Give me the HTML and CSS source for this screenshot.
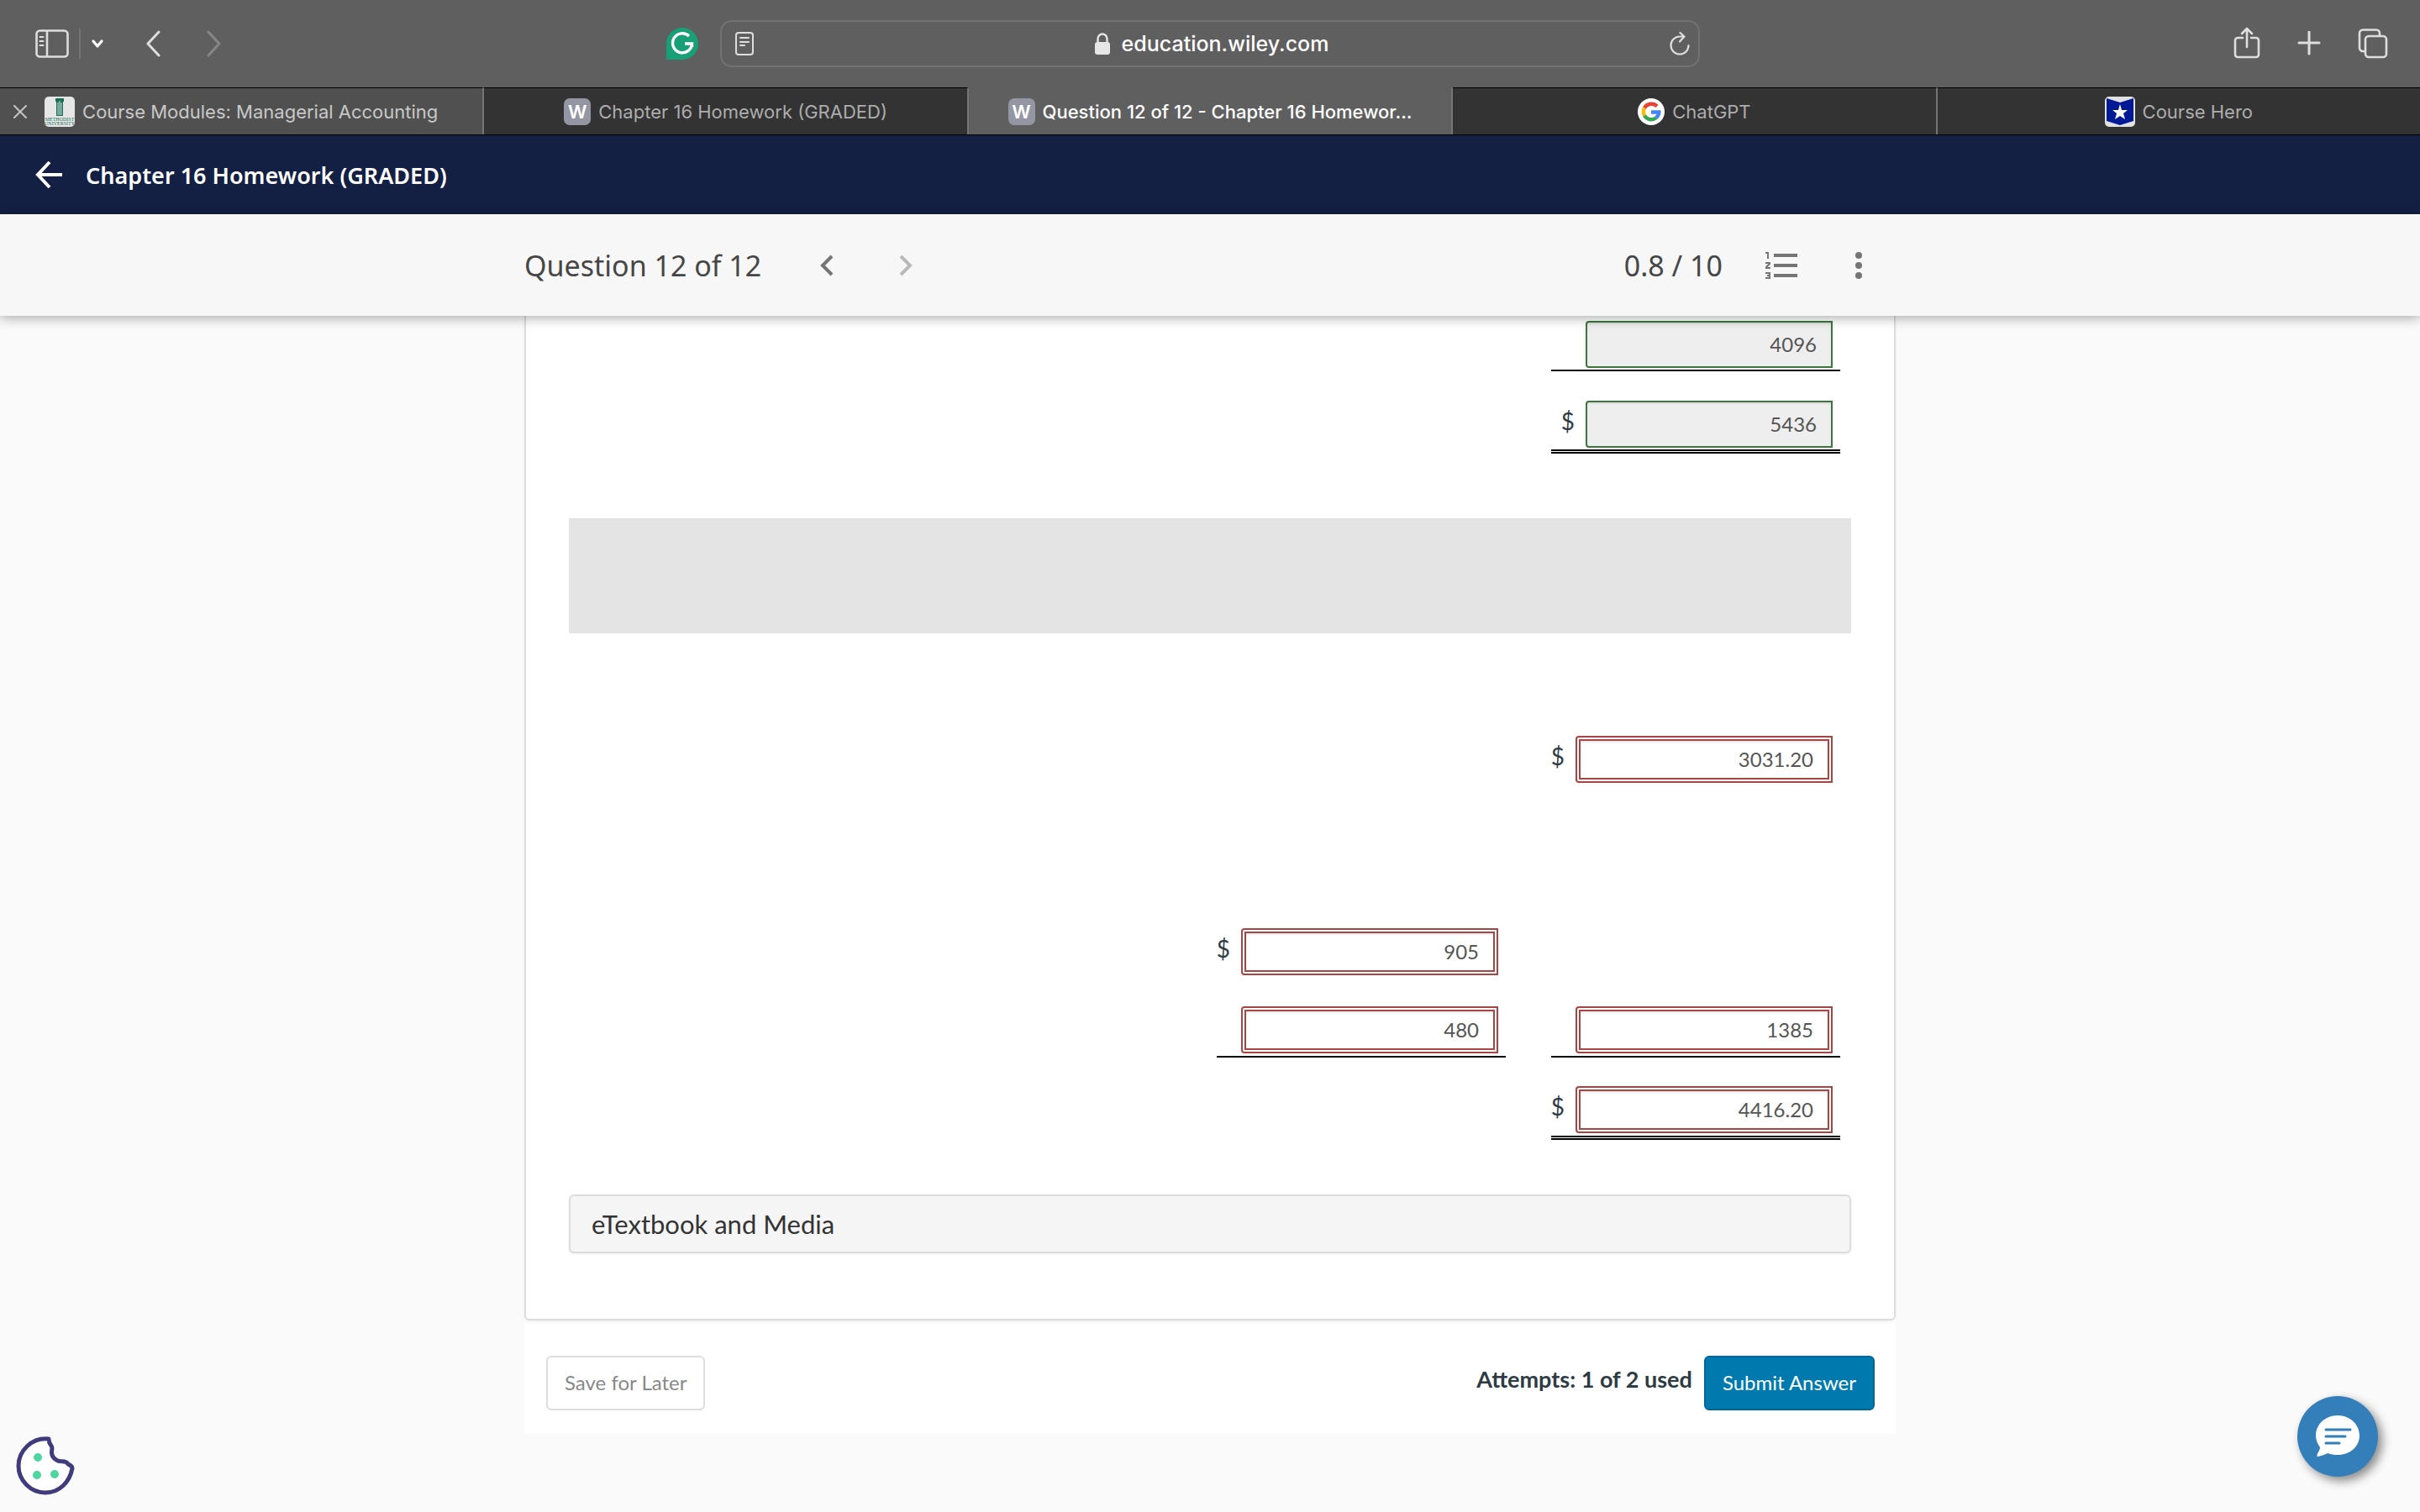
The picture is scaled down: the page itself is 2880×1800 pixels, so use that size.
FILE: index.html
```html
<!DOCTYPE html>
<html lang="en">
<head>
    <meta charset="UTF-8">
    <meta name="viewport" content="width=device-width, initial-scale=1.0">
    <title>Question 12 of 12 - Chapter 16 Homework</title>
    <link rel="stylesheet" href="styles.css">
</head>
<body>
    <!-- Browser toolbar -->
    <div class="toolbar">
        <div class="tools-left">
            <button class="icon-btn" aria-label="Show sidebar">
                <svg width="40" height="34" viewBox="0 0 40 34" fill="none" stroke="#dedede" stroke-width="2.6">
                    <rect x="1.5" y="1.5" width="37" height="31" rx="4"/>
                    <path d="M14 2v30"/>
                    <path d="M5.5 9h4M5.5 14h4M5.5 19h4" stroke-width="2" stroke-linecap="round"/>
                </svg>
            </button>
            <span class="divider"></span>
            <button class="icon-btn caret" aria-label="Tab groups">
                <svg width="16" height="12" viewBox="0 0 16 12" fill="none" stroke="#fff" stroke-width="3.2" stroke-linecap="round" stroke-linejoin="round"><path d="M3 3l5 6 5-6"/></svg>
            </button>
            <button class="icon-btn back" aria-label="Back">
                <svg width="18" height="32" viewBox="0 0 18 32" fill="none" stroke="#dedede" stroke-width="3" stroke-linecap="round" stroke-linejoin="round"><path d="M15 2L2 16l13 14"/></svg>
            </button>
            <button class="icon-btn forward" aria-label="Forward" disabled>
                <svg width="18" height="32" viewBox="0 0 18 32" fill="none" stroke="#868686" stroke-width="3" stroke-linecap="round" stroke-linejoin="round"><path d="M2 2l13 14L2 30"/></svg>
            </button>
            <button class="icon-btn grammar" aria-label="Grammarly">
                <svg width="38" height="38" viewBox="0 0 38 38">
                    <path d="M0 38V19a19 19 0 1 1 19 19z" fill="#17a076"/>
                    <path d="M27 10A11.5 11.5 0 1 0 30.5 19H22M30.5 18v5" fill="none" stroke="#fff" stroke-width="3.4"/>
                </svg>
            </button>
        </div>
        <div class="address">
            <button class="icon-btn" aria-label="Show reader">
                <svg width="22" height="28" viewBox="0 0 22 28" fill="none" stroke="#dedede" stroke-width="2" stroke-linecap="round"><rect x="1" y="1" width="20" height="26" rx="3"/><path d="M6 7h10M6 12h10M6 16h5"/></svg>
            </button>
            <span class="url">
                <svg width="18" height="26" viewBox="0 0 18 26"><rect y="11" width="18" height="15" rx="3" fill="#e6e6e6"/><path d="M3.5 12V7a5.5 5.5 0 0 1 11 0v5" fill="none" stroke="#e6e6e6" stroke-width="2.4"/></svg>
                education.wiley.com
            </span>
            <button class="icon-btn" aria-label="Reload">
                <svg width="24" height="28" viewBox="0 0 24 28" fill="none" stroke="#dedede" stroke-width="2.2" stroke-linecap="round" stroke-linejoin="round"><path d="M22.5 16a10.5 10.5 0 1 1-10.5-10.5h5M12.5 1l5 4.5-5.5 6"/></svg>
            </button>
        </div>
        <div class="tools-right">
            <button class="icon-btn" aria-label="Share">
                <svg width="32" height="40" viewBox="0 0 32 40" fill="none" stroke="#dedede" stroke-width="2.6" stroke-linecap="round" stroke-linejoin="round"><path d="M11 13H5a3 3 0 0 0-3 3v17a3 3 0 0 0 3 3h22a3 3 0 0 0 3-3V16a3 3 0 0 0-3-3h-6M16 24V2M10 8l6-6 6 6"/></svg>
            </button>
            <button class="icon-btn" aria-label="New tab">
                <svg width="28" height="30" viewBox="0 0 28 30" stroke="#dedede" stroke-width="3" stroke-linecap="round"><path d="M14 1v26M2 14h24"/></svg>
            </button>
            <button class="icon-btn" aria-label="Tab overview">
                <svg width="36" height="36" viewBox="0 0 36 36" fill="none" stroke="#dedede" stroke-width="2.6" stroke-linejoin="round"><rect x="9" y="9" width="25" height="25" rx="4"/><path d="M9 27H6a4 4 0 0 1-4-4V5.5a4 4 0 0 1 4-4h16a4 4 0 0 1 4 4v4"/></svg>
            </button>
        </div>
    </div>

    <!-- Tabs -->
    <div class="tabs">
        <div class="tab hovered">
            <button class="icon-btn close" aria-label="Close tab">
                <svg width="16" height="16" viewBox="0 0 16 16" stroke="#c4c4c4" stroke-width="2" stroke-linecap="round"><path d="M1 1l14 14M15 1L1 15"/></svg>
            </button>
            <svg width="36" height="36" viewBox="0 0 36 36">
                <rect width="36" height="36" rx="5" fill="#e6e6e6"/>
                <path d="M13 2h10v4H13zM14 6h8v17h-8z" fill="#1b6f56"/>
                <path d="M16 7v15M18 5v17M20 7v15" stroke="#d5e2dc"/>
                <text class="crest" x="18" y="29" text-anchor="middle">METHODIST</text>
                <text class="crest" x="18" y="34" text-anchor="middle">UNIVERSITY</text>
            </svg>
            <span>Course Modules: Managerial Accounting</span>
        </div>
        <div class="tab">
            <span class="favicon">W</span>
            <span>Chapter 16 Homework (GRADED)</span>
        </div>
        <div class="tab active">
            <span class="favicon">W</span>
            <span>Question 12 of 12 - Chapter 16 Homewor...</span>
        </div>
        <div class="tab">
            <svg width="32" height="32" viewBox="0 0 32 32" fill="none" stroke-width="4.4">
                <circle cx="16" cy="16" r="16" fill="#fff"/>
                <path d="M8 11.5A9.5 9.5 0 0 1 23 9.5" stroke="#ea4335"/>
                <path d="M8 20.5a9.5 9.5 0 0 1 0-9" stroke="#fbbc05"/>
                <path d="M22 23.3A9.5 9.5 0 0 1 8 20.5" stroke="#34a853"/>
                <path d="M16 16.5h9.3a9.5 9.5 0 0 1-3.3 6.8" stroke="#4285f4"/>
            </svg>
            <span>ChatGPT</span>
        </div>
        <div class="tab">
            <svg width="36" height="36" viewBox="0 0 36 36">
                <rect width="36" height="36" rx="5" fill="#e2e2e2"/>
                <path d="M2 2l16 5 16-5v27l-16 5-16-5z" fill="#001a96"/>
                <path d="M18 9l2 7h7l-5 4 2 7-6-4-6 4 2-7-5-4h7z" fill="#fff"/>
            </svg>
            <span>Course Hero</span>
        </div>
    </div>

    <!-- Course bar -->
    <header class="course-bar">
        <a href="#" aria-label="Back to course">
            <svg width="32" height="34" viewBox="0 0 32 34" fill="none" stroke="#fff" stroke-width="4"><path d="M32 17H3M17 2L3 17l14 15"/></svg>
        </a>
        <h1>Chapter 16 Homework (GRADED)</h1>
    </header>

    <div class="question-bar">
        <div class="question-inner">
            <h2>Question 12 of 12</h2>
            <button class="icon-btn prev" aria-label="Previous question">
                <svg width="16" height="26" viewBox="0 0 16 26" fill="none" stroke="#757575" stroke-width="4"><path d="M14 2L3 13l11 11"/></svg>
            </button>
            <button class="icon-btn next" aria-label="Next question" disabled>
                <svg width="16" height="26" viewBox="0 0 16 26" fill="none" stroke="#b9b9b9" stroke-width="4"><path d="M2 2l11 11L2 24"/></svg>
            </button>
            <span class="score">0.8 / 10</span>
            <button class="icon-btn list" aria-label="Question list">
                <svg width="40" height="32" viewBox="0 0 40 32" fill="none" stroke="#757575">
                    <path d="M11 4h28M11 16h28M11 28h28" stroke-width="4"/>
                    <path d="M1 1h3v7M1 13h5v1L2 18v1h5M1 25h5v6H1M3 28h3" stroke-width="2"/>
                </svg>
            </button>
            <button class="icon-btn more" aria-label="More options">
                <svg width="8" height="32" viewBox="0 0 8 32" fill="#757575"><circle cx="4" cy="4" r="4"/><circle cx="4" cy="16" r="4"/><circle cx="4" cy="28" r="4"/></svg>
            </button>
        </div>
    </div>

    <main class="page">
        <section class="card">
            <table class="answers">
                <colgroup><col><col class="amount"><col class="space"><col class="amount"><col class="edge"></colgroup>
                <tr class="row-first">
                    <td></td><td></td><td></td>
                    <td class="total"><div class="field"><input class="correct" type="text" value="4096" aria-label="Amount" readonly></div></td>
                    <td></td>
                </tr>
                <tr class="row">
                    <td></td><td></td><td></td>
                    <td class="grand"><div class="field"><label for="a2">$</label><input class="correct" id="a2" type="text" value="5436" readonly></div></td>
                    <td></td>
                </tr>
            </table>

            <div class="band"></div>

            <table class="answers wide">
                <colgroup><col><col class="amount"><col class="space"><col class="amount"><col class="edge"></colgroup>
                <tr class="row-tall">
                    <td></td><td></td><td></td>
                    <td><div class="field"><label for="b1">$</label><input class="wrong" id="b1" type="text" value="3031.20"></div></td>
                    <td></td>
                </tr>
                <tr class="row-taller">
                    <td></td>
                    <td><div class="field"><label for="b2">$</label><input class="wrong" id="b2" type="text" value="905"></div></td>
                    <td></td><td></td><td></td>
                </tr>
                <tr class="row">
                    <td></td>
                    <td class="total"><div class="field"><input class="wrong" type="text" value="480" aria-label="Amount"></div></td>
                    <td></td>
                    <td class="total"><div class="field"><input class="wrong" type="text" value="1385" aria-label="Subtotal"></div></td>
                    <td></td>
                </tr>
                <tr class="row">
                    <td></td><td></td><td></td>
                    <td class="grand"><div class="field"><label for="b5">$</label><input class="wrong" id="b5" type="text" value="4416.20"></div></td>
                    <td></td>
                </tr>
            </table>

            <button class="resource">eTextbook and Media</button>
        </section>

        <div class="actions">
            <button class="btn">Save for Later</button>
            <div class="submit">
                <span class="attempts">Attempts: 1 of 2 used</span>
                <button class="btn primary">Submit Answer</button>
            </div>
        </div>
    </main>

    <button class="icon-btn cookie" aria-label="Cookie settings">
        <svg width="70" height="70" viewBox="0 0 70 70">
            <path d="M39 3C19 1 3 17 3 35s15 32 32 32 29-13 32-29c0-3-3-4-5-5-3-6-9-1-14-5-6-4-6-8-5-14 0-4-4-4-4-11z" fill="#fff" stroke="#403b7c" stroke-width="5" stroke-linejoin="round"/>
            <g fill="#4fd59e"><circle cx="26" cy="25" r="5"/><circle cx="25" cy="46" r="5"/><circle cx="46" cy="45" r="5"/></g>
        </svg>
    </button>
    <button class="icon-btn chat" aria-label="Open chat">
        <svg width="52" height="50" viewBox="0 0 52 50">
            <path d="M26 0C11 0 0 11 0 24c0 5 2 10 5 14 0 4-4 7-3.5 11C6 48.5 10 47 14 45c4 1.5 8 2 12 2 15 0 26-10 26-23S41 0 26 0z" fill="#fff"/>
            <path d="M12 17h29M12 25h23M12 33h16" stroke="#347eba" stroke-width="3" stroke-linecap="round"/>
        </svg>
    </button>
</body>
</html>
```
FILE: styles.css
```css
* {
    margin: 0;
    padding: 0;
    box-sizing: border-box;
}

body {
    background: #fafafa;
    font-family: Lato, sans-serif;
}

.icon-btn {
    background: none;
    border: none;
    display: flex;
    cursor: pointer;
}

/* browser chrome */
.toolbar {
    display: grid;
    grid-template-columns: 1fr 1166px 1fr;
    column-gap: 26px;
    align-items: center;
    height: 104px;
    background: #5f5f5f;
    font-family: Inter, sans-serif;
}

.tools-left {
    display: flex;
    align-items: center;
    padding-left: 42px;
}

.divider {
    width: 2px;
    height: 36px;
    margin: 0 12px;
    background: #757575;
}

.back {
    margin-left: 50px;
}

.forward {
    margin-left: 54px;
}

.grammar {
    margin-left: auto;
}

.address {
    display: flex;
    align-items: center;
    justify-content: space-between;
    height: 56px;
    padding: 0 10px 0 16px;
    border: 2px solid #727272;
    border-radius: 14px;
}

.url {
    display: flex;
    align-items: center;
    gap: 14px;
    color: #fff;
    font-size: 25px;
    font-weight: 500;
}

.tools-right {
    display: flex;
    align-items: center;
    justify-content: flex-end;
    gap: 44px;
    padding-right: 38px;
}

.tabs {
    display: flex;
    height: 57px;
    background: #5f5f5f;
    border-bottom: 1px solid #000;
    font-family: Inter, sans-serif;
}

.tab {
    flex: 1;
    position: relative;
    display: flex;
    align-items: center;
    justify-content: center;
    gap: 9px;
    background: #333;
    border-top: 1px solid #000;
    border-right: 2px solid #757575;
    color: #adadad;
    font-size: 22px;
    white-space: nowrap;
}

.tab:last-child {
    border-right: none;
}

.tab.hovered {
    background: #505050;
    color: #c8c8c8;
}

.tab.active {
    background: #5f5f5f;
    border-top-color: #5f5f5f;
    color: #fff;
    font-weight: 500;
}

.close {
    position: absolute;
    left: 16px;
}

.favicon {
    width: 32px;
    height: 32px;
    border-radius: 7px;
    background: #9496a3;
    color: #fff;
    font-size: 22px;
    font-weight: 600;
    line-height: 32px;
    text-align: center;
}

.crest {
    fill: #1b6f56;
    font-family: "Liberation Serif", serif;
    font-size: 6px;
}

/* course and question headers */
.course-bar {
    display: flex;
    align-items: center;
    gap: 28px;
    height: 94px;
    padding-left: 42px;
    background: #141f44;
    color: #fff;
}

.course-bar a {
    display: flex;
}

.course-bar h1 {
    font-family: "Noto Sans", sans-serif;
    font-size: 27px;
    font-weight: 600;
}

.question-bar {
    position: relative;
    z-index: 1;
    background: #f7f7f7;
    box-shadow: 0 2px 14px rgba(0, 0, 0, 0.35);
}

.question-inner {
    display: flex;
    align-items: center;
    max-width: 1632px;
    height: 121px;
    margin: 0 auto;
    padding-right: 40px;
    color: #464646;
    font-family: "Noto Sans", sans-serif;
    font-size: 34px;
}

.question-inner h2 {
    font-size: 34px;
    font-weight: 400;
}

.prev {
    margin-left: 70px;
}

.next {
    margin-left: 78px;
}

.score {
    margin-left: auto;
}

.list {
    margin-left: 50px;
}

.more {
    margin-left: 68px;
}

/* question body */
.page {
    max-width: 1632px;
    margin: 0 auto;
    background: #fff;
}

.card {
    padding: 0 51px 78px;
    border: 2px solid #ddd;
    border-top: none;
    border-radius: 0 0 6px 6px;
    box-shadow: 0 2px 3px rgba(0, 0, 0, 0.06);
}

.answers {
    width: 100%;
    table-layout: fixed;
    border-collapse: separate;
    border-spacing: 0;
}

.amount {
    width: 344px;
}

.space {
    width: 54px;
}

.edge {
    width: 13px;
}

.answers td {
    vertical-align: bottom;
}

.row-first {
    height: 66px;
}

.row {
    height: 98px;
}

.row-tall {
    height: 178px;
}

.row-taller {
    height: 229px;
}

.answers .total {
    padding-bottom: 2px;
    border-bottom: 2px solid #000;
}

.answers .grand {
    padding-bottom: 2px;
    border-bottom: 5px double #000;
}

.wide .total,
.wide .grand {
    padding-bottom: 3px;
}

.field {
    display: flex;
    align-items: center;
    justify-content: flex-end;
    padding-right: 9px;
}

.field label {
    padding: 0 13px 8px 0;
    color: #2d3b45;
    font-size: 28px;
}

.field input {
    width: 306px;
    height: 56px;
    padding: 0 17px 2px;
    color: #555;
    font-family: Lato, sans-serif;
    font-size: 24px;
    text-align: right;
    border-radius: 4px 0 0 4px;
    box-shadow: inset 0 2px 2px rgba(0, 0, 0, 0.08);
}

.field .correct {
    width: 294px;
    background: #eee;
    border: 2px solid #3c763d;
}

.field .wrong {
    background: #fff;
    border: 6px double #a94442;
}

.band {
    height: 137px;
    margin-top: 77px;
    background: #e4e4e4;
}

.resource {
    display: block;
    width: 100%;
    height: 70px;
    margin-top: 65px;
    padding: 0 25px;
    background: #f5f5f5;
    border: 2px solid #ddd;
    border-radius: 6px;
    box-shadow: 0 1px 2px rgba(0, 0, 0, 0.08);
    color: #333;
    font-family: Lato, sans-serif;
    font-size: 31px;
    text-align: left;
}

.actions {
    display: flex;
    justify-content: space-between;
    padding: 42px 25px 28px 26px;
}

.submit {
    display: flex;
    align-items: center;
    gap: 14px;
}

.attempts {
    padding-bottom: 10px;
    color: #2d3b45;
    font-size: 27px;
    font-weight: 700;
}

.btn {
    height: 65px;
    padding: 0 20px 2px;
    background: #fff;
    border: 2px solid #ddd;
    border-radius: 6px;
    color: #888;
    font-family: Lato, sans-serif;
    font-size: 24px;
    cursor: pointer;
}

.btn.primary {
    background: #007aae;
    border-color: #006695;
    color: #fff;
}

/* floating widgets */
.cookie {
    position: fixed;
    left: 19px;
    bottom: 20px;
}

.chat {
    position: fixed;
    right: 50px;
    bottom: 42px;
    width: 96px;
    height: 96px;
    align-items: center;
    justify-content: center;
    background: #347eba;
    border-radius: 50%;
    box-shadow: 5px 5px 12px rgba(0, 0, 0, 0.45);
}
```
